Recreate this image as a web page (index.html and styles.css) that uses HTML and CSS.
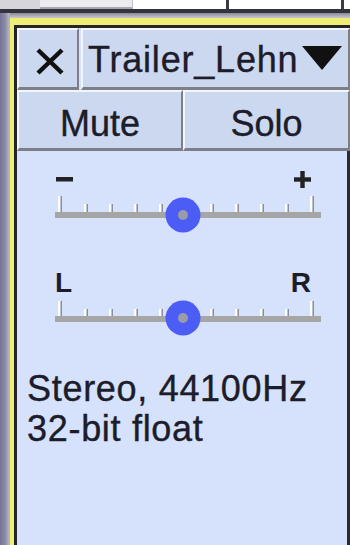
FILE: index.html
```html
<!DOCTYPE html>
<html>
<head>
<meta charset="utf-8">
<link rel="stylesheet" href="styles.css">
</head>
<body>
<div class="tabs">
  <div class="tab t1"></div>
  <div class="tab t2"></div>
  <div class="tab t3"></div>
  <div class="tab t4"></div>
  <div class="tab t5"></div>
</div>
<div class="darkbar"></div>
<div class="frame">
  <div class="yframe">
    <div class="dframe">
      <div class="panel">
        <div class="row row1">
          <div class="btn close">
            <svg width="30" height="27" viewBox="0 0 30 27"><path d="M3 2 L27 25 M27 2 L3 25" stroke="#111" stroke-width="4.5" fill="none"/></svg>
          </div>
          <div class="btn name">
            <span class="name-text">Trailer_Lehn</span>
            <svg class="tri" width="40" height="25" viewBox="0 0 40 25"><path d="M0 0 H40 L20 24 Z" fill="#111"/></svg>
          </div>
        </div>
        <div class="row row2">
          <div class="btn mute"><span>Mute</span></div>
          <div class="btn solo"><span>Solo</span></div>
        </div>
        <div class="lower">
          <div class="slider gain">
            <div class="labels glabels">
              <svg width="17" height="5" viewBox="0 0 17 5"><rect x="0" y="0" width="17" height="4.5" fill="#222"/></svg>
              <svg width="17" height="17" viewBox="0 0 17 17"><rect x="0" y="6.3" width="17" height="4.4" fill="#222"/><rect x="6.3" y="0" width="4.4" height="17" fill="#222"/></svg>
            </div>
            <svg class="track" width="270" height="45" viewBox="0 0 270 45">
              <rect x="3" y="23" width="266" height="6" fill="#a6a6a6"/>
              <g fill="#ffffff">
                <rect x="6" y="7" width="2.5" height="16"/>
                <rect x="32" y="15" width="2.5" height="8"/>
                <rect x="57" y="15" width="2.5" height="8"/>
                <rect x="82" y="15" width="2.5" height="8"/>
                <rect x="107" y="15" width="2.5" height="8"/>
                <rect x="158" y="15" width="2.5" height="8"/>
                <rect x="183" y="15" width="2.5" height="8"/>
                <rect x="208" y="15" width="2.5" height="8"/>
                <rect x="233" y="15" width="2.5" height="8"/>
                <rect x="258" y="7" width="2.5" height="16"/>
              </g>
              <g fill="#8e8e9e">
                <rect x="8.5" y="7" width="1.5" height="16"/>
                <rect x="34.5" y="15" width="1.5" height="8"/>
                <rect x="59.5" y="15" width="1.5" height="8"/>
                <rect x="84.5" y="15" width="1.5" height="8"/>
                <rect x="109.5" y="15" width="1.5" height="8"/>
                <rect x="160.5" y="15" width="1.5" height="8"/>
                <rect x="185.5" y="15" width="1.5" height="8"/>
                <rect x="210.5" y="15" width="1.5" height="8"/>
                <rect x="235.5" y="15" width="1.5" height="8"/>
                <rect x="260.5" y="7" width="1.5" height="16"/>
              </g>
              <circle cx="131" cy="26" r="17.5" fill="#4b5df5"/>
              <circle cx="131" cy="26" r="5" fill="#9a9aaa"/>
            </svg>
          </div>
          <div class="slider pan">
            <div class="labels plabels"><span>L</span><span>R</span></div>
            <svg class="track" width="270" height="42" viewBox="0 0 270 42">
              <rect x="3" y="19" width="266" height="6" fill="#a6a6a6"/>
              <g fill="#ffffff">
                <rect x="6" y="4" width="2.5" height="15"/>
                <rect x="32" y="12" width="2.5" height="7"/>
                <rect x="57" y="12" width="2.5" height="7"/>
                <rect x="82" y="12" width="2.5" height="7"/>
                <rect x="107" y="12" width="2.5" height="7"/>
                <rect x="158" y="12" width="2.5" height="7"/>
                <rect x="183" y="12" width="2.5" height="7"/>
                <rect x="208" y="12" width="2.5" height="7"/>
                <rect x="233" y="12" width="2.5" height="7"/>
                <rect x="258" y="4" width="2.5" height="15"/>
              </g>
              <g fill="#8e8e9e">
                <rect x="8.5" y="4" width="1.5" height="15"/>
                <rect x="34.5" y="12" width="1.5" height="7"/>
                <rect x="59.5" y="12" width="1.5" height="7"/>
                <rect x="84.5" y="12" width="1.5" height="7"/>
                <rect x="109.5" y="12" width="1.5" height="7"/>
                <rect x="160.5" y="12" width="1.5" height="7"/>
                <rect x="185.5" y="12" width="1.5" height="7"/>
                <rect x="210.5" y="12" width="1.5" height="7"/>
                <rect x="235.5" y="12" width="1.5" height="7"/>
                <rect x="260.5" y="4" width="1.5" height="15"/>
              </g>
              <circle cx="131" cy="21" r="17.5" fill="#4b5df5"/>
              <circle cx="131" cy="21" r="5" fill="#9a9aaa"/>
            </svg>
          </div>
          <div class="info">
            <div>Stereo, 44100Hz</div>
            <div>32-bit float</div>
          </div>
        </div>
      </div>
    </div>
  </div>
</div>
</body>
</html>
```
FILE: styles.css
```css
* { box-sizing: border-box; }
html, body { margin: 0; padding: 0; }
body {
  width: 350px;
  height: 545px;
  overflow: hidden;
  background: #d6e2fc;
  font-family: "Liberation Sans", Arial, sans-serif;
  color: #1c1c2a;
  -webkit-text-stroke: 0.4px #1c1c2a;
}
.tabs { display: flex; height: 9px; background: #ffffff; }
.tab { height: 9px; }
.t1 { width: 40px; background: #d6d6da; }
.t2 { width: 93px; background: #ececee; border-bottom: 2px solid #a8a8b0; border-right: 1px solid #c0c0c8; }
.t3 { width: 96px; background: #ffffff; border-right: 3px solid #3a3a44; }
.t4 { width: 115px; background: #ffffff; border-right: 3px solid #3a3a44; }
.t5 { flex: 1; background: #ffffff; }
.darkbar { height: 4px; background: #34343e; }
.frame {
  height: 532px;
  padding: 5px 0 0 10px;
  background: linear-gradient(to right, #74749a 0, #8a8aa6 5px, #b4b4c0 9px, #b4b4c0 10px);
  position: relative;
}
.frame::before {
  content: "";
  position: absolute;
  left: 10px; right: 0; top: 0; height: 5px;
  background: linear-gradient(to bottom, #8a8a96, #c8c8cc);
}
.yframe {
  height: 100%;
  border-top: 7px solid #eeee74;
  border-left: 4px solid #eeee74;
}
.dframe {
  height: 100%;
  border-top: 3px solid #24242a;
  border-left: 3px solid #24242a;
}
.panel {
  height: 100%;
  display: flex;
  flex-direction: column;
  background: #d6e2fc;
}
.row { display: flex; }
.row1 { height: 62px; gap: 2px; }
.row2 { height: 61px; }
.btn {
  background: #ccd8f0;
  border-top: 2px solid #f2f6ff;
  border-left: 2px solid #f2f6ff;
  border-bottom: 3px solid #7e7e88;
  border-right: 2px solid #7e7e88;
  display: flex;
  align-items: center;
  font-size: 36px;
  line-height: 41px;
}
.close { width: 62px; padding: 5px 0 0 16px; }
.close svg { display: block; }
.name { flex: 1; padding: 2px 6px 0 5px; justify-content: space-between; }
.name-text { letter-spacing: 0.8px; }
.tri { display: block; margin-top: -2px; }
.mute { width: 166px; justify-content: center; padding-top: 6px; }
.solo { flex: 1; justify-content: center; padding-top: 6px; }
.lower {
  flex: 1;
  border-right: 3px solid #2a2a34;
  padding-top: 18px;
}
.slider { width: 270px; margin-left: 35px; }
.track { display: block; }
.labels { display: flex; justify-content: space-between; }
.glabels { height: 20px; align-items: center; padding: 0 11px 0 4px; }
.glabels svg { display: block; }
.plabels {
  margin-top: 35px;
  height: 28px;
  font-size: 28px;
  line-height: 28px;
  font-weight: bold;
  -webkit-text-stroke: 0;
  padding: 0 11px 0 3px;
}
.info {
  margin-top: 30px;
  padding-left: 10px;
  font-size: 36px;
  line-height: 40px;
  letter-spacing: 0.7px;
}
```
